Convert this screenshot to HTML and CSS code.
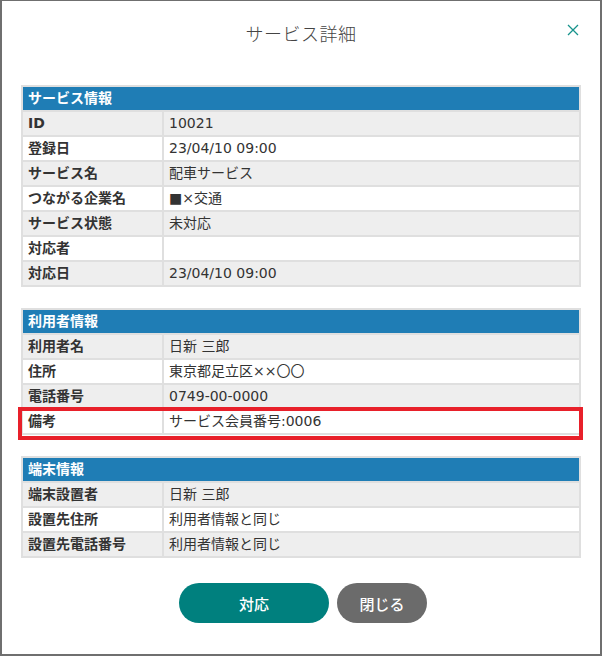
FILE: index.html
```html
<!DOCTYPE html>
<html lang="ja">
<head>
    <meta charset="UTF-8">
    <meta name="viewport" content="width=device-width, initial-scale=1.0">
    <title>サービス詳細</title>
    <link rel="stylesheet" href="styles.css">
</head>
<body>
    <div class="dialog">
        <div class="dialog-head">
            <h1 class="dialog-title">サービス詳細</h1>
            <button class="close-btn" type="button" aria-label="閉じる">
                <svg width="12" height="12" viewBox="0 0 12 12">
                    <path d="M1 1 L11 11 M11 1 L1 11" stroke="#17938c" stroke-width="1.3" fill="none"/>
                </svg>
            </button>
        </div>

        <div class="dialog-body">
            <div class="info-box">
                <div class="info-head">サービス情報</div>
                <div class="info-row"><div class="info-label">ID</div><div class="info-value">10021</div></div>
                <div class="info-row white"><div class="info-label">登録日</div><div class="info-value">23/04/10 09:00</div></div>
                <div class="info-row"><div class="info-label">サービス名</div><div class="info-value">配車サービス</div></div>
                <div class="info-row white"><div class="info-label">つながる企業名</div><div class="info-value">■×交通</div></div>
                <div class="info-row"><div class="info-label">サービス状態</div><div class="info-value">未対応</div></div>
                <div class="info-row white"><div class="info-label">対応者</div><div class="info-value"></div></div>
                <div class="info-row"><div class="info-label">対応日</div><div class="info-value">23/04/10 09:00</div></div>
            </div>

            <div class="info-box">
                <div class="info-head">利用者情報</div>
                <div class="info-row"><div class="info-label">利用者名</div><div class="info-value">日新 三郎</div></div>
                <div class="info-row white"><div class="info-label">住所</div><div class="info-value">東京都足立区××〇〇</div></div>
                <div class="info-row"><div class="info-label">電話番号</div><div class="info-value">0749-00-0000</div></div>
                <div class="info-row white marked"><div class="info-label">備考</div><div class="info-value">サービス会員番号:0006</div></div>
            </div>

            <div class="info-box">
                <div class="info-head">端末情報</div>
                <div class="info-row"><div class="info-label">端末設置者</div><div class="info-value">日新 三郎</div></div>
                <div class="info-row white"><div class="info-label">設置先住所</div><div class="info-value">利用者情報と同じ</div></div>
                <div class="info-row"><div class="info-label">設置先電話番号</div><div class="info-value">利用者情報と同じ</div></div>
            </div>
        </div>

        <div class="dialog-foot">
            <button class="btn btn-main" type="button">対応</button>
            <button class="btn btn-close" type="button">閉じる</button>
        </div>
    </div>
</body>
</html>
```

FILE: styles.css
```css
body {
    margin: 0;
    font-family: "DejaVu Sans", "Noto Sans CJK JP", sans-serif;
    color: #333;
    background: #fff;
}
.dialog {
    width: 602px;
    height: 656px;
    box-sizing: border-box;
    border: 2px solid #6f6f6f;
    border-top-width: 1px;
    background: #fff;
    position: relative;
}
.dialog-head {
    height: 63px;
    display: flex;
    align-items: center;
    justify-content: center;
}
.dialog-title {
    margin: 0;
    font-family: "Noto Sans CJK JP", sans-serif;
    font-size: 18px;
    font-weight: 300;
    color: #444;
    letter-spacing: 0.5px;
}
.close-btn {
    position: absolute;
    top: 22px;
    right: 20px;
    width: 14px;
    height: 14px;
    padding: 0;
    border: none;
    background: none;
    display: flex;
    align-items: center;
    justify-content: center;
}
.dialog-body {
    padding: 21px 19px 0;
    display: flex;
    flex-direction: column;
    gap: 21px;
}
.info-box {
    background: #dfdfdf;
    padding: 2px;
    display: flex;
    flex-direction: column;
    gap: 2px;
}
.info-head {
    height: 23px;
    line-height: 23px;
    background: #1f7db5;
    color: #fff;
    font-size: 14px;
    font-weight: 700;
    padding-left: 5px;
}
.info-row {
    display: flex;
    gap: 2px;
    height: 23px;
    font-size: 14px;
    line-height: 23px;
}
.info-row > div {
    background: #eeeeee;
    padding-left: 5px;
}
.info-row.white > div {
    background: #fff;
}
.info-label {
    width: 134px;
    font-weight: 700;
    flex-shrink: 0;
}
.info-value {
    flex: 1;
}
.info-row.marked {
    position: relative;
}
.info-row.marked::after {
    content: "";
    position: absolute;
    top: -3px;
    left: -5px;
    right: -4px;
    bottom: -7px;
    border: 4px solid #e8202a;
    pointer-events: none;
}
.dialog-foot {
    margin-top: 25px;
    display: flex;
    justify-content: center;
    gap: 8px;
    padding-left: 4px;
}
.btn {
    height: 40px;
    border: none;
    border-radius: 20px;
    color: #fff;
    font-family: "Noto Sans CJK JP", sans-serif;
    font-size: 15px;
    font-weight: 500;
}
.btn-main {
    width: 150px;
    background: #00807e;
}
.btn-close {
    width: 90px;
    background: #6b6b6b;
}
```
